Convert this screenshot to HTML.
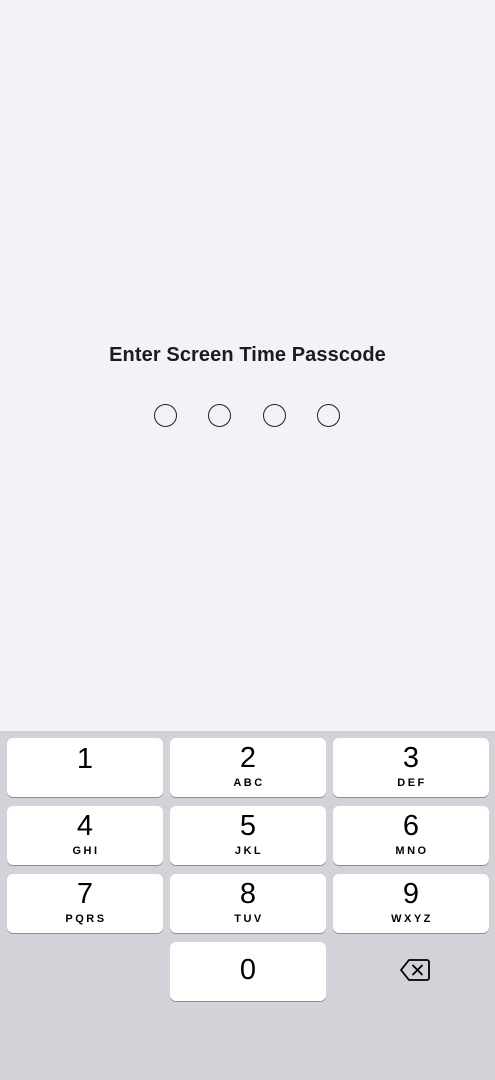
<!DOCTYPE html><html><head><style>
body{margin:0;width:495px;height:1080px;background:#f2f2f7;position:relative;overflow:hidden;font-family:"Liberation Sans",sans-serif;}
.t{position:absolute;top:344px;left:0;width:495px;text-align:center;font-size:20px;font-weight:bold;color:#1c1c1e;letter-spacing:0.1px;}
.c{position:absolute;top:404px;width:21px;height:21px;border:1.6px solid #222;border-radius:50%;}
.kb{position:absolute;top:731px;left:0;width:495px;height:349px;background:#d2d3d9;}
.k{position:absolute;width:156px;height:59px;background:#fff;border-radius:6px;box-shadow:0 1px 0 #8b8d92;text-align:center;color:#000;}
.n{font-size:29px;line-height:29px;margin-top:6px;}
.l{font-size:11px;font-weight:bold;letter-spacing:2.5px;margin-top:4px;padding-left:2px;}
</style></head><body>
<div class="t">Enter Screen Time Passcode</div>
<div class="c" style="left:154px"></div><div class="c" style="left:208px"></div><div class="c" style="left:263px"></div><div class="c" style="left:317px"></div>
<div class="kb"></div>
<div class="k" style="left:7px;top:738px"><div class="n" style="margin-top:7px">1</div></div>
<div class="k" style="left:170px;top:738px"><div class="n">2</div><div class="l">ABC</div></div>
<div class="k" style="left:333px;top:738px"><div class="n">3</div><div class="l">DEF</div></div>
<div class="k" style="left:7px;top:806px"><div class="n">4</div><div class="l">GHI</div></div>
<div class="k" style="left:170px;top:806px"><div class="n">5</div><div class="l">JKL</div></div>
<div class="k" style="left:333px;top:806px"><div class="n">6</div><div class="l">MNO</div></div>
<div class="k" style="left:7px;top:874px"><div class="n">7</div><div class="l">PQRS</div></div>
<div class="k" style="left:170px;top:874px"><div class="n">8</div><div class="l">TUV</div></div>
<div class="k" style="left:333px;top:874px"><div class="n">9</div><div class="l">WXYZ</div></div>
<div class="k" style="left:170px;top:942px"><div class="n" style="margin-top:14px">0</div></div>
<svg style="position:absolute;left:399px;top:958px" width="32" height="24" viewBox="0 0 32 24"><path d="M10 2H28a2 2 0 0 1 2 2V20a2 2 0 0 1-2 2H10L2 12Z" fill="none" stroke="#000" stroke-width="1.8" stroke-linejoin="round"/><path d="M14 7.5l9 9M23 7.5l-9 9" stroke="#000" stroke-width="1.8" stroke-linecap="round"/></svg>
</body></html>
